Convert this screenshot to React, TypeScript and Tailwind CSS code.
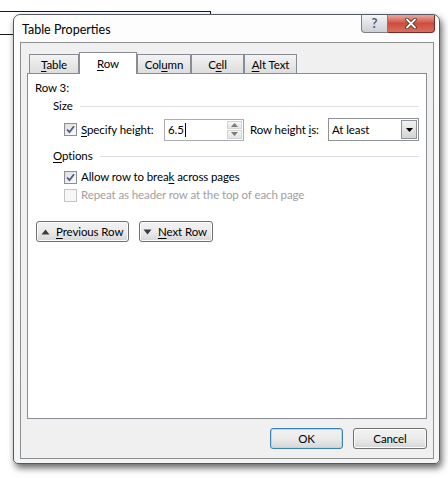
import React from "react";

const FONT = "font-['Lato',sans-serif]";

function U({ children }: { children: React.ReactNode }) {
  return <span className="underline underline-offset-[2px]">{children}</span>;
}

function CheckBox({ checked = false, disabled = false }: { checked?: boolean; disabled?: boolean }) {
  return (
    <span
      className={
        disabled
          ? "flex h-[13px] w-[13px] shrink-0 items-center justify-center border border-[#c4c4c4] bg-[#f7f7f7]"
          : "flex h-[13px] w-[13px] shrink-0 items-center justify-center border border-[#8e8f8f] bg-gradient-to-br from-[#dedede] to-[#fbfbfb]"
      }
    >
      {checked ? (
        <svg width="9" height="9" viewBox="0 0 9 9">
          <path d="M1 4.5 L3.5 7.2 L8 1.2" fill="none" stroke="#4a5b8c" strokeWidth="1.8" />
        </svg>
      ) : null}
    </span>
  );
}

function Tab({ label, width, active = false }: { label: React.ReactNode; width: number; active?: boolean }) {
  if (active) {
    return (
      <div
        style={{ width }}
        className="flex h-[22px] items-start justify-center whitespace-nowrap border border-b-0 border-[#898c95] bg-white pt-[2px] text-[11.5px] tracking-[-0.1px] text-black"
      >
        {label}
      </div>
    );
  }
  return (
    <div
      style={{ width }}
      className="mb-px flex h-[19px] items-center justify-center whitespace-nowrap border border-b-0 border-[#898c95] bg-gradient-to-b from-[#f3f3f3] to-[#dddddd] pt-[1px] text-[11.5px] tracking-[-0.1px] text-black"
    >
      {label}
    </div>
  );
}

function PushButton({
  children,
  width,
  isDefault = false,
}: {
  children: React.ReactNode;
  width: number;
  isDefault?: boolean;
}) {
  return (
    <div
      style={{ width }}
      className={
        isDefault
          ? "flex h-[21px] items-center justify-center whitespace-nowrap rounded-[3px] border border-[#3c7fb1] bg-gradient-to-b from-[#f2f2f2] via-[#ebebeb] to-[#d6d6d6] text-[11.5px] tracking-[-0.1px] text-black shadow-[inset_0_0_0_1px_#a9dcf5]"
          : "flex h-[21px] items-center justify-center whitespace-nowrap rounded-[3px] border border-[#707070] bg-gradient-to-b from-[#f2f2f2] via-[#ebebeb] to-[#d6d6d6] text-[11.5px] tracking-[-0.1px] text-black shadow-[inset_0_0_0_1px_#fcfcfc]"
      }
    >
      {children}
    </div>
  );
}

function Triangle({ up }: { up: boolean }) {
  return (
    <svg width="9" height="6" viewBox="0 0 9 6" className="shrink-0">
      <path d={up ? "M0.5 5.5 L4.5 0.5 L8.5 5.5 Z" : "M0.5 0.5 L8.5 0.5 L4.5 5.5 Z"} fill="#3c3c3c" />
    </svg>
  );
}

function GroupLabel({ children }: { children: React.ReactNode }) {
  return (
    <div className="flex h-[16px] items-center whitespace-nowrap text-black">
      <span>{children}</span>
      <span className="ml-[7px] h-px flex-1 bg-[#dcdfe3]" />
    </div>
  );
}

export default function App() {
  return (
    <div className={`relative h-[478px] w-[448px] overflow-hidden bg-white ${FONT}`}>
      {/* window lying behind the dialog */}
      <div className="absolute left-0 top-[11px] h-px w-[211px] bg-[#1a1a1a]" />
      <div className="absolute left-[210px] top-[11px] h-[5px] w-px bg-[#1a1a1a]" />
      <div className="absolute left-0 top-[34px] h-px w-[14px] bg-[#1a1a1a]" />

      <div className="pl-[13px] pt-[14px]">
        <div className="relative flex h-[450px] w-[427px] flex-col rounded-t-[7px] rounded-b-[5px] border border-[#555a60] bg-gradient-to-b from-[#fdfdfd] to-[#f4f5f7] shadow-[2px_4px_7px_rgba(0,0,0,0.6)]">
          {/* title bar */}
          <div className="flex h-[27px] items-start justify-between pl-[8px] pr-[4px]">
            <div className="whitespace-nowrap pt-[7px] text-[12.5px] leading-[16px] text-black">Table Properties</div>
            <div className="flex">
              <div className="flex h-[18px] w-[27px] items-center justify-center rounded-bl-[4px] border border-t-0 border-[#7b7f85] bg-gradient-to-b from-[#f4f5f7] via-[#dfe2e6] to-[#cdd1d6] text-[13px] font-bold leading-none text-[#5a5f66]">
                ?
              </div>
              <div className="flex h-[18px] w-[47px] items-center justify-center rounded-br-[4px] border border-l-0 border-t-0 border-[#7a2a22] bg-gradient-to-b from-[#e8a89e] via-[#cf4b3d] to-[#d7705f]">
                <svg width="12" height="11" viewBox="0 0 12 11">
                  <path d="M2 1.5 L10 9.5 M10 1.5 L2 9.5" stroke="#3b2a2a" strokeWidth="3.4" strokeLinecap="round" />
                  <path d="M2 1.5 L10 9.5 M10 1.5 L2 9.5" stroke="#ffffff" strokeWidth="1.8" strokeLinecap="round" />
                </svg>
              </div>
            </div>
          </div>

          {/* client area */}
          <div className="mb-[4px] ml-[6px] mr-[5px] flex flex-1 flex-col border border-[#8e8f8f] bg-[#f0f0f0] px-[6px] pt-[9px]">
            <div className="relative z-10 -mb-px flex items-end pl-[2px]">
              <Tab width={50} label={<span><U>T</U>able</span>} />
              <Tab width={58} active label={<span><U>R</U>ow</span>} />
              <Tab width={54} label={<span>Col<U>u</U>mn</span>} />
              <Tab width={53} label={<span>C<U>e</U>ll</span>} />
              <Tab width={53} label={<span><U>A</U>lt Text</span>} />
            </div>

            <div className="flex flex-1 flex-col whitespace-nowrap border border-[#898c95] bg-white px-[7px] pt-[6px] text-[11.5px] tracking-[-0.1px] text-black">
              <div className="h-[16px] leading-[16px]">Row 3:</div>

              <div className="ml-[18px] mt-[2px]">
                <GroupLabel>Size</GroupLabel>
              </div>

              <div className="ml-[29px] mt-[4px] flex h-[23px] items-center">
                <CheckBox checked />
                <span className="ml-[4px] w-[83px]">
                  <U>S</U>pecify height:
                </span>
                <div className="flex h-[22px] w-[80px] border border-[#abadb3] bg-white">
                  <div className="flex flex-1 items-center pl-[3px]">
                    <span>6.5</span>
                    <span className="ml-px h-[14px] w-px bg-black" />
                  </div>
                  <div className="flex w-[17px] flex-col gap-px p-px">
                    <div className="flex flex-1 items-center justify-center border border-[#d4d4d4] bg-gradient-to-b from-[#f6f6f6] to-[#e4e4e4]">
                      <svg width="7" height="4" viewBox="0 0 7 4">
                        <path d="M0 4 L3.5 0 L7 4 Z" fill="#7b7b7b" />
                      </svg>
                    </div>
                    <div className="flex flex-1 items-center justify-center border border-[#d4d4d4] bg-gradient-to-b from-[#f6f6f6] to-[#e4e4e4]">
                      <svg width="7" height="4" viewBox="0 0 7 4">
                        <path d="M0 0 L7 0 L3.5 4 Z" fill="#7b7b7b" />
                      </svg>
                    </div>
                  </div>
                </div>
                <span className="ml-[6px] w-[78px]">
                  Row height <U>i</U>s:
                </span>
                <div className="flex h-[23px] flex-1 items-center border border-[#8f9296] bg-white pl-[3px] pr-px">
                  <span className="flex-1">At least</span>
                  <div className="flex h-[19px] w-[16px] items-center justify-center border border-[#8f9296] bg-gradient-to-b from-[#f2f2f2] to-[#d4d4d4]">
                    <svg width="7" height="4" viewBox="0 0 7 4">
                      <path d="M0 0 L7 0 L3.5 4 Z" fill="#000" />
                    </svg>
                  </div>
                </div>
              </div>

              <div className="ml-[18px] mt-[7px]">
                <GroupLabel>
                  <U>O</U>ptions
                </GroupLabel>
              </div>

              <div className="ml-[29px] mt-[5px] flex h-[16px] items-center">
                <CheckBox checked />
                <span className="ml-[4px]">
                  Allow row to brea<U>k</U> across pages
                </span>
              </div>
              <div className="ml-[29px] mt-[2px] flex h-[16px] items-center text-[#a0a0a0]">
                <CheckBox disabled />
                <span className="ml-[4px]">Repeat as header row at the top of each page</span>
              </div>

              <div className="ml-px mt-[18px] flex gap-[10px]">
                <PushButton width={93}>
                  <div className="flex w-full items-center pl-[4px]">
                    <Triangle up />
                    <span className="ml-[6px]">
                      <U>P</U>revious Row
                    </span>
                  </div>
                </PushButton>
                <PushButton width={74}>
                  <div className="flex w-full items-center pl-[3px]">
                    <Triangle up={false} />
                    <span className="ml-[6px]">
                      <U>N</U>ext Row
                    </span>
                  </div>
                </PushButton>
              </div>
            </div>

            <div className="flex justify-end gap-[10px] pb-[9px] pt-[9px]">
              <PushButton width={73} isDefault>
                OK
              </PushButton>
              <PushButton width={74}>Cancel</PushButton>
            </div>
          </div>
        </div>
      </div>
    </div>
  );
}
